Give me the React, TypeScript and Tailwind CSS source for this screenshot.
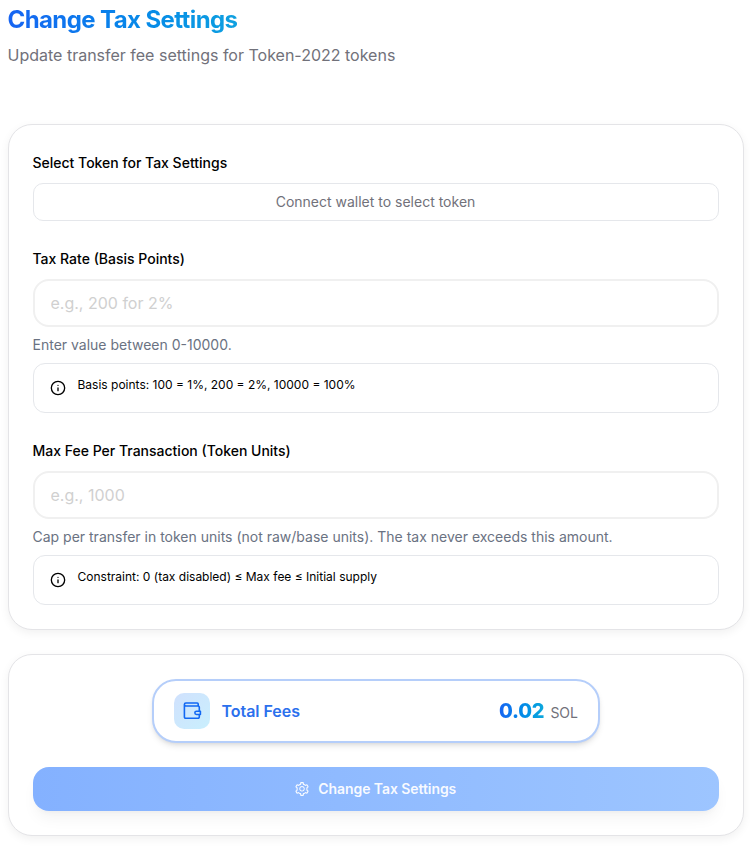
import React, { useState } from 'react';
import { Info } from 'lucide-react';
import { AiOutlineSetting } from 'react-icons/ai';

const WalletIcon: React.FC = () => (
  <svg width="20" height="20" viewBox="0 0 20 20" fill="none" stroke="#1268f3" strokeWidth="1.6" strokeLinejoin="round">
    <path d="M16.2 5V3a1 1 0 0 0-1-1H3.9a1.5 1.5 0 0 0 0 3h12.2a1.2 1.2 0 0 1 1.2 1.2v9.9a1.2 1.2 0 0 1-1.2 1.2H3.6a1.2 1.2 0 0 1-1.2-1.2V3.5" />
    <path d="M18.4 10.2h-3.9a1.6 1.6 0 0 0 0 3.3h3.9z" fill="#cbe8fd" />
  </svg>
);

interface FieldProps {
  label: string;
  placeholder: string;
  helper: string;
  note: string;
}

const Field: React.FC<FieldProps> = ({ label, placeholder, helper, note }) => {
  const [value, setValue] = useState('');

  return (
    <div>
      <label className="block mb-1.5 -ml-[0.5px] text-sm leading-7 font-medium text-black">{label}</label>
      <input
        type="text"
        value={value}
        onChange={e => setValue(e.target.value)}
        placeholder={placeholder}
        className="block w-full h-12 px-[15.5px] text-base bg-white border-2 border-[#f0f0f0] rounded-2xl placeholder:text-[#d0d0d0] focus:outline-none focus:border-blue-400"
      />
      <p className="mt-2 -ml-[0.5px] text-sm text-gray-500">{helper}</p>
      <div className="flex mt-2 h-[50px] px-4 border border-gray-200 rounded-xl">
        <Info className="w-4 h-4 mt-4 text-black" />
        <p className="ml-[11.5px] mt-3 text-xs leading-[18px] text-black">{note}</p>
      </div>
    </div>
  );
};

const App: React.FC = () => {
  return (
    <div className="w-[752px] px-2 pb-2.5 bg-white overflow-hidden font-['Inter',sans-serif]">
      <header className="h-[124px] pt-1">
        <h1 className="w-fit -ml-[0.5px] text-2xl font-bold tracking-tight bg-gradient-to-r from-[#1764f2] to-[#0fa0e0] bg-clip-text text-transparent">
          Change Tax Settings
        </h1>
        <p className="mt-[7px] -ml-[0.5px] text-base leading-6 text-[#71717a]">Update transfer fee settings for Token-2022 tokens</p>
      </header>

      <section className="p-6 space-y-6 bg-white border border-[#e4e4e7] rounded-3xl shadow-[0_3px_10px_rgba(0,0,0,0.06)]">
        <div>
          <label className="block mb-1.5 -ml-[0.5px] text-sm leading-7 font-medium text-black">Select Token for Tax Settings</label>
          <button type="button" className="block w-full h-[38px] pr-px text-sm text-[#71717a] border border-gray-200 rounded-[10px]">
            Connect wallet to select token
          </button>
        </div>
        <Field
          label="Tax Rate (Basis Points)"
          placeholder="e.g., 200 for 2%"
          helper="Enter value between 0-10000."
          note="Basis points: 100 = 1%, 200 = 2%, 10000 = 100%"
        />
        <Field
          label="Max Fee Per Transaction (Token Units)"
          placeholder="e.g., 1000"
          helper="Cap per transfer in token units (not raw/base units). The tax never exceeds this amount."
          note="Constraint: 0 (tax disabled) ≤ Max fee ≤ Initial supply"
        />
      </section>

      <section className="mt-6 p-6 bg-white border border-[#e4e4e7] rounded-3xl shadow-[0_3px_10px_rgba(0,0,0,0.06)]">
        <div className="flex items-center max-w-md h-16 mx-auto px-5 bg-white border-2 border-[#b5cefa] rounded-3xl shadow-md shadow-black/10">
          <div className="flex items-center justify-center w-9 h-9 rounded-[10px] bg-gradient-to-br from-[#d0e1fd] to-[#c9effd]">
            <WalletIcon />
          </div>
          <span className="ml-[11.5px] text-base font-semibold tracking-[-0.002em] text-[#2b70ed]">Total Fees</span>
          <div className="flex items-baseline ml-auto">
            <span className="text-xl font-extrabold tracking-[-0.01em] bg-gradient-to-r from-[#1764f2] to-[#0fa8dc] bg-clip-text text-transparent">0.02</span>
            <span className="ml-1.5 text-sm text-[#71717a]">SOL</span>
          </div>
        </div>
        <button
          type="button"
          className="flex items-center justify-center w-full h-11 mt-6 pr-[1.5px] text-sm font-semibold tracking-[-0.005em] text-white/95 bg-gradient-to-r from-[#84b1ff] to-[#9dc5ff] rounded-2xl shadow-lg shadow-black/5"
        >
          <AiOutlineSetting className="w-4 h-4 mr-2" />
          Change Tax Settings
        </button>
      </section>
    </div>
  );
};

export default App;
